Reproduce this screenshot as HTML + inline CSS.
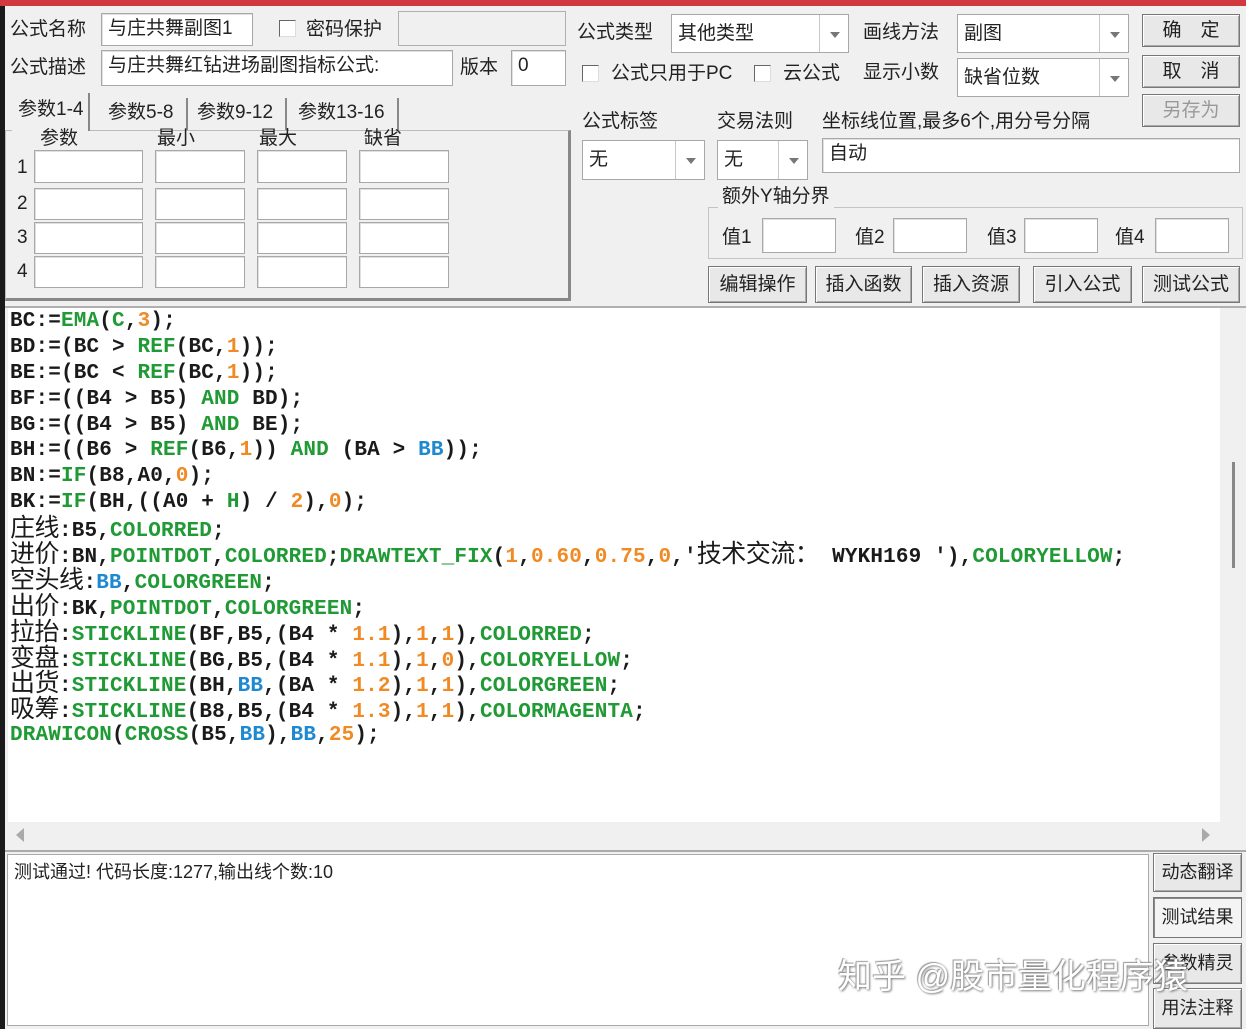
<!DOCTYPE html>
<html><head><meta charset="utf-8">
<style>
*{box-sizing:border-box;margin:0;padding:0}
body{width:1246px;height:1029px;overflow:hidden;background:#f0f0f0;position:relative;font-family:"Liberation Sans","Noto Sans CJK SC",sans-serif;color:#222}
.a{position:absolute;white-space:nowrap}
.lb{font-size:19px;line-height:22px}
.in{position:absolute;background:#fff;border:1px solid #a8a8a8;box-shadow:inset 1px 1px 0 #e0e0e0;font-size:19px;line-height:30px;padding-left:6px}
.cb{position:absolute;width:17px;height:17px;background:#fff;border:1px solid #666;border-right-color:#ddd;border-bottom-color:#ddd}
.combo{position:absolute;background:#fff;border:1px solid #a8a8a8;font-size:19px;padding-left:6px}
.combo .dd{position:absolute;right:0;top:0;bottom:0;width:29px;border-left:1px solid #c8c8c8;background:#fff}
.combo .dd:after{content:"";position:absolute;left:10px;top:50%;margin-top:-2px;border-left:5px solid transparent;border-right:5px solid transparent;border-top:6px solid #777}
.btn{position:absolute;background:#e8e8e8;border:1px solid #777;box-shadow:inset 1px 1px 0 #fff,inset -1px -1px 0 #aaa;font-size:19px;text-align:center;color:#222}
.code{position:absolute;left:8px;top:308px;width:1212px;height:514px;background:#fff;padding-top:1px}
.code div{height:25.9px;line-height:25.9px;font-family:"Liberation Mono",monospace;font-weight:bold;font-size:21px;letter-spacing:0.15px;color:#1a1a1a;white-space:pre;padding-left:2px}
.g{color:#1f9a35}.o{color:#f08a24}.b{color:#1e88d0}
.cn{font-family:"Liberation Sans","Noto Sans CJK SC",sans-serif;font-weight:normal;font-size:25px;letter-spacing:-0.5px}
</style></head><body>
<div class="a" style="left:0;top:0;width:1246px;height:6px;background:#d0393f"></div>
<div class="a" style="left:0;top:6px;width:5px;height:1023px;background:#1a1a1a"></div>

<div class="a lb" style="left:10px;top:19px">公式名称</div>
<div class="in" style="left:101px;top:13px;width:152px;height:33px">与庄共舞副图1</div>
<div class="cb" style="left:279px;top:20px"></div>
<div class="a lb" style="left:306px;top:19px">密码保护</div>
<div class="a" style="left:398px;top:11px;width:168px;height:35px;border:1px solid #b0b0b0;background:#f0f0f0"></div>
<div class="a lb" style="left:10px;top:57px">公式描述</div>
<div class="in" style="left:101px;top:50px;width:352px;height:36px">与庄共舞红钻进场副图指标公式:</div>
<div class="a lb" style="left:460px;top:57px">版本</div>
<div class="in" style="left:511px;top:50px;width:55px;height:36px">0</div>

<div class="a" style="left:5px;top:130px;width:566px;height:171px;border:1px solid #bbb;border-right:3px solid #888;border-bottom:3px solid #888"></div>
<div class="a lb" style="left:12px;top:93px;width:78px;height:38px;border-right:2px solid #888;padding:6px 0 0 6px;background:#f0f0f0">参数1-4</div>
<div class="a lb" style="left:92px;top:98px;width:96px;height:32px;border-right:2px solid #888;padding:4px 0 0 16px">参数5-8</div>
<div class="a lb" style="left:188px;top:98px;width:99px;height:32px;border-right:2px solid #888;padding:4px 0 0 9px">参数9-12</div>
<div class="a lb" style="left:287px;top:98px;width:112px;height:32px;border-right:2px solid #888;padding:4px 0 0 11px">参数13-16</div>
<div class="a lb" style="left:40px;top:128px">参数</div>
<div class="a lb" style="left:157px;top:128px">最小</div>
<div class="a lb" style="left:259px;top:128px">最大</div>
<div class="a lb" style="left:364px;top:128px">缺省</div>
<div class="a lb" style="left:17px;top:157px">1</div>
<div class="a lb" style="left:17px;top:193px">2</div>
<div class="a lb" style="left:17px;top:227px">3</div>
<div class="a lb" style="left:17px;top:261px">4</div>
<div class="in" style="left:34px;top:150px;width:109px;height:33px"></div><div class="in" style="left:155px;top:150px;width:90px;height:33px"></div><div class="in" style="left:257px;top:150px;width:90px;height:33px"></div><div class="in" style="left:359px;top:150px;width:90px;height:33px"></div>
<div class="in" style="left:34px;top:188px;width:109px;height:32px"></div><div class="in" style="left:155px;top:188px;width:90px;height:32px"></div><div class="in" style="left:257px;top:188px;width:90px;height:32px"></div><div class="in" style="left:359px;top:188px;width:90px;height:32px"></div>
<div class="in" style="left:34px;top:222px;width:109px;height:32px"></div><div class="in" style="left:155px;top:222px;width:90px;height:32px"></div><div class="in" style="left:257px;top:222px;width:90px;height:32px"></div><div class="in" style="left:359px;top:222px;width:90px;height:32px"></div>
<div class="in" style="left:34px;top:256px;width:109px;height:32px"></div><div class="in" style="left:155px;top:256px;width:90px;height:32px"></div><div class="in" style="left:257px;top:256px;width:90px;height:32px"></div><div class="in" style="left:359px;top:256px;width:90px;height:32px"></div>

<div class="a lb" style="left:577px;top:22px">公式类型</div>
<div class="combo" style="left:671px;top:14px;width:178px;height:39px;line-height:37px">其他类型<span class="dd"></span></div>
<div class="a lb" style="left:863px;top:22px">画线方法</div>
<div class="combo" style="left:957px;top:14px;width:172px;height:39px;line-height:37px">副图<span class="dd"></span></div>
<div class="btn" style="left:1142px;top:14px;width:98px;height:33px;line-height:31px">确　定</div>
<div class="cb" style="left:582px;top:65px"></div>
<div class="a lb" style="left:611px;top:63px">公式只用于PC</div>
<div class="cb" style="left:754px;top:65px"></div>
<div class="a lb" style="left:783px;top:63px">云公式</div>
<div class="a lb" style="left:863px;top:62px">显示小数</div>
<div class="combo" style="left:957px;top:58px;width:172px;height:39px;line-height:37px">缺省位数<span class="dd"></span></div>
<div class="btn" style="left:1142px;top:55px;width:98px;height:33px;line-height:31px">取　消</div>
<div class="btn" style="left:1142px;top:94px;width:98px;height:33px;line-height:31px;color:#999">另存为</div>
<div class="a lb" style="left:582px;top:111px">公式标签</div>
<div class="a lb" style="left:717px;top:111px">交易法则</div>
<div class="a lb" style="left:822px;top:111px">坐标线位置,最多6个,用分号分隔</div>
<div class="combo" style="left:582px;top:140px;width:123px;height:40px;line-height:38px">无<span class="dd"></span></div>
<div class="combo" style="left:717px;top:140px;width:91px;height:40px;line-height:38px">无<span class="dd"></span></div>
<div class="in" style="left:822px;top:138px;width:418px;height:35px">自动</div>
<div class="a" style="left:708px;top:207px;width:535px;height:52px;border:1px solid #c4c4c4"></div>
<div class="a lb" style="left:718px;top:186px;background:#f0f0f0;padding:0 4px">额外Y轴分界</div>
<div class="a lb" style="left:722px;top:227px">值1</div><div class="in" style="left:762px;top:218px;width:74px;height:35px"></div>
<div class="a lb" style="left:855px;top:227px">值2</div><div class="in" style="left:893px;top:218px;width:74px;height:35px"></div>
<div class="a lb" style="left:987px;top:227px">值3</div><div class="in" style="left:1024px;top:218px;width:74px;height:35px"></div>
<div class="a lb" style="left:1115px;top:227px">值4</div><div class="in" style="left:1155px;top:218px;width:74px;height:35px"></div>
<div class="btn" style="left:708px;top:266px;width:99px;height:37px;line-height:35px">编辑操作</div>
<div class="btn" style="left:815px;top:266px;width:97px;height:37px;line-height:35px">插入函数</div>
<div class="btn" style="left:922px;top:266px;width:98px;height:37px;line-height:35px">插入资源</div>
<div class="btn" style="left:1033px;top:266px;width:99px;height:37px;line-height:35px">引入公式</div>
<div class="btn" style="left:1142px;top:266px;width:98px;height:37px;line-height:35px">测试公式</div>
<div class="a" style="left:5px;top:306px;width:1241px;height:2px;background:#b0b0b0"></div>

<div class="code">
<div>BC:=<span class="g">EMA</span>(<span class="g">C</span>,<span class="o">3</span>);</div>
<div>BD:=(BC &gt; <span class="g">REF</span>(BC,<span class="o">1</span>));</div>
<div>BE:=(BC &lt; <span class="g">REF</span>(BC,<span class="o">1</span>));</div>
<div>BF:=((B4 &gt; B5) <span class="g">AND</span> BD);</div>
<div>BG:=((B4 &gt; B5) <span class="g">AND</span> BE);</div>
<div>BH:=((B6 &gt; <span class="g">REF</span>(B6,<span class="o">1</span>)) <span class="g">AND</span> (BA &gt; <span class="b">BB</span>));</div>
<div>BN:=<span class="g">IF</span>(B8,A0,<span class="o">0</span>);</div>
<div>BK:=<span class="g">IF</span>(BH,((A0 + <span class="g">H</span>) / <span class="o">2</span>),<span class="o">0</span>);</div>
<div><span class="cn">庄线</span>:B5,<span class="g">COLORRED</span>;</div>
<div><span class="cn">进价</span>:BN,<span class="g">POINTDOT</span>,<span class="g">COLORRED</span>;<span class="g">DRAWTEXT_FIX</span>(<span class="o">1</span>,<span class="o">0.60</span>,<span class="o">0.75</span>,<span class="o">0</span>,'<span class="cn">技术交流：</span> WYKH169 '),<span class="g">COLORYELLOW</span>;</div>
<div><span class="cn">空头线</span>:<span class="b">BB</span>,<span class="g">COLORGREEN</span>;</div>
<div><span class="cn">出价</span>:BK,<span class="g">POINTDOT</span>,<span class="g">COLORGREEN</span>;</div>
<div><span class="cn">拉抬</span>:<span class="g">STICKLINE</span>(BF,B5,(B4 * <span class="o">1.1</span>),<span class="o">1</span>,<span class="o">1</span>),<span class="g">COLORRED</span>;</div>
<div><span class="cn">变盘</span>:<span class="g">STICKLINE</span>(BG,B5,(B4 * <span class="o">1.1</span>),<span class="o">1</span>,<span class="o">0</span>),<span class="g">COLORYELLOW</span>;</div>
<div><span class="cn">出货</span>:<span class="g">STICKLINE</span>(BH,<span class="b">BB</span>,(BA * <span class="o">1.2</span>),<span class="o">1</span>,<span class="o">1</span>),<span class="g">COLORGREEN</span>;</div>
<div><span class="cn">吸筹</span>:<span class="g">STICKLINE</span>(B8,B5,(B4 * <span class="o">1.3</span>),<span class="o">1</span>,<span class="o">1</span>),<span class="g">COLORMAGENTA</span>;</div>
<div><span class="g">DRAWICON</span>(<span class="g">CROSS</span>(B5,<span class="b">BB</span>),<span class="b">BB</span>,<span class="o">25</span>);</div>
</div>
<div class="a" style="left:1232px;top:462px;width:3px;height:106px;background:#888"></div>
<div class="a" style="left:16px;top:828px;width:0;height:0;border-top:7px solid transparent;border-bottom:7px solid transparent;border-right:8px solid #aaa"></div>
<div class="a" style="left:1202px;top:828px;width:0;height:0;border-top:7px solid transparent;border-bottom:7px solid transparent;border-left:8px solid #aaa"></div>
<div class="a" style="left:5px;top:850px;width:1241px;height:2px;background:#aaa"></div>

<div class="a" style="left:7px;top:854px;width:1142px;height:172px;background:#fff;border:1px solid #aaa"></div>
<div class="a" style="left:14px;top:861px;font-size:18px;line-height:22px;color:#222">测试通过! 代码长度:1277,输出线个数:10</div>
<div class="btn" style="left:1153px;top:853px;width:89px;height:39px;line-height:37px;font-size:18px">动态翻译</div>
<div class="btn" style="left:1153px;top:897px;width:89px;height:41px;line-height:39px;font-size:18px;background:#f4f4f4;box-shadow:inset 1px 1px 0 #888">测试结果</div>
<div class="btn" style="left:1153px;top:943px;width:89px;height:41px;line-height:39px;font-size:18px">参数精灵</div>
<div class="btn" style="left:1153px;top:988px;width:89px;height:41px;line-height:39px;font-size:18px">用法注释</div>
<div class="a" style="left:838px;top:956px;font-size:34px;line-height:42px;color:#fff;text-shadow:1px 1px 2px #777,-1px -1px 1px #999">知乎 @股市量化程序猿</div>
</body></html>
